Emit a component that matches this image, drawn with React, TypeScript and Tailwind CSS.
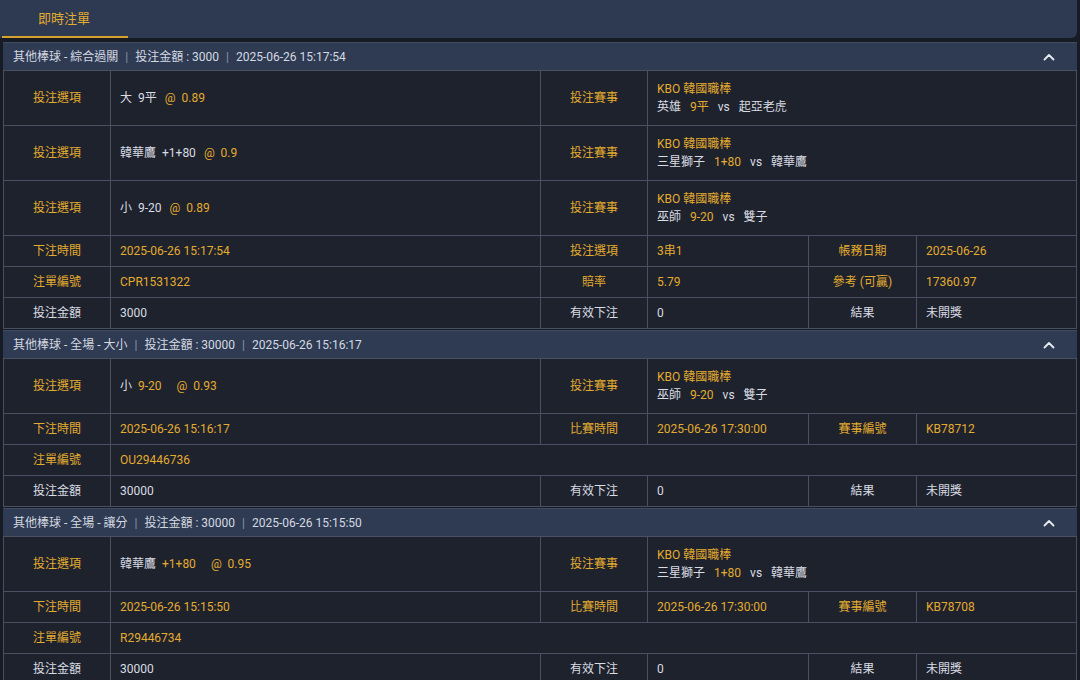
import React from "react";

const gold = "text-[#e3ab30]";
const white = "text-[#d9dce3]";

function Label({ text, g }: { text: string; g?: boolean }) {
    return <td className={`border border-[#4a5061] text-center ${g ? gold : white}`}>{text}</td>;
}

function Value({ children, g, span }: { children: React.ReactNode; g?: boolean; span?: number }) {
    return <td colSpan={span} className={`border border-[#4a5061] pl-[9px] ${g ? gold : white}`}>{children}</td>;
}

function Pick({ a, b, odds, bGold, wide }: { a: string; b: string; odds: string; bGold?: boolean; wide?: boolean }) {
    return <span>
        {a}<span className={`ml-[6px] ${bGold ? gold : ""}`}>{b}</span>
        <span className={`${gold} ${wide ? "ml-[15px]" : "ml-[8px]"}`}>@&nbsp; {odds}</span>
    </span>;
}

function Match({ home, hc, away }: { home: string; hc: string; away: string }) {
    return <div className="leading-[18px]">
        <div className={gold}>KBO 韓國職棒</div>
        <div>{home}<span className={`${gold} ml-[9px]`}>{hc}</span><span className="ml-[9px]">vs</span><span className="ml-[9px]">{away}</span></div>
    </div>;
}

function Header({ text }: { text: React.ReactNode }) {
    return <div className="h-[28px] bg-[#2e3b53] border-t border-[#414c62] flex items-center justify-between pl-[10px] pr-[22px] text-[#d5d9e1]">
        <span>{text}</span>
        <svg width="12" height="8" viewBox="0 0 12 8" fill="none">
            <path d="M1.5 6.5 6 2l4.5 4.5" stroke="#e6e9ef" strokeWidth="1.8" strokeLinecap="round" strokeLinejoin="round" />
        </svg>
    </div>;
}

function Sep() {
    return <span className="mx-[7px] text-[#8b93a4]">|</span>;
}

function Cols() {
    return <colgroup>
        <col className="w-[107px]" />
        <col className="w-[430px]" />
        <col className="w-[107px]" />
        <col className="w-[161px]" />
        <col className="w-[108px]" />
        <col />
    </colgroup>;
}

function Footer({ amount }: { amount: string }) {
    return <tr className="h-[31px]">
        <Label text="投注金額" />
        <Value>{amount}</Value>
        <Label text="有效下注" />
        <Value>0</Value>
        <Label text="結果" />
        <Value>未開獎</Value>
    </tr>;
}

export default function App() {
    return <div className="w-[1080px] h-[680px] overflow-hidden bg-[#171b24] text-[12px]" style={{fontFamily: "Roboto, 'Noto Sans CJK TC', sans-serif"}}>
        <div className="h-[38px] bg-[#2d3a51] rounded-br-[6px] mr-[3px] flex items-end pl-[2px]">
            <div className="w-[126px] h-full flex items-center justify-center border-b-2 border-[#d7a22c] text-[13px] text-[#e3ab30] pt-[1px] pr-[2px]">即時注單</div>
        </div>
        <div className="px-[3px] pt-[4px] flex flex-col gap-[1px]">
            <div>
                <Header text={<>其他棒球 - 綜合過關<Sep />投注金額 : 3000<Sep />2025-06-26 15:17:54</>} />
                <table className="w-full table-fixed border-collapse bg-[#1e222c]">
                    <Cols />
                    <tbody>
                        <tr className="h-[55px]">
                            <Label text="投注選項" g />
                            <Value><Pick a="大" b="9平" odds="0.89" /></Value>
                            <Label text="投注賽事" g />
                            <Value span={3}><Match home="英雄" hc="9平" away="起亞老虎" /></Value>
                        </tr>
                        <tr className="h-[55px]">
                            <Label text="投注選項" g />
                            <Value><Pick a="韓華鷹" b="+1+80" odds="0.9" /></Value>
                            <Label text="投注賽事" g />
                            <Value span={3}><Match home="三星獅子" hc="1+80" away="韓華鷹" /></Value>
                        </tr>
                        <tr className="h-[55px]">
                            <Label text="投注選項" g />
                            <Value><Pick a="小" b="9-20" odds="0.89" /></Value>
                            <Label text="投注賽事" g />
                            <Value span={3}><Match home="巫師" hc="9-20" away="雙子" /></Value>
                        </tr>
                        <tr className="h-[31px]">
                            <Label text="下注時間" g />
                            <Value g>2025-06-26 15:17:54</Value>
                            <Label text="投注選項" g />
                            <Value g>3串1</Value>
                            <Label text="帳務日期" g />
                            <Value g>2025-06-26</Value>
                        </tr>
                        <tr className="h-[31px]">
                            <Label text="注單編號" g />
                            <Value g>CPR1531322</Value>
                            <Label text="賠率" g />
                            <Value g>5.79</Value>
                            <Label text="參考 (可贏)" g />
                            <Value g>17360.97</Value>
                        </tr>
                        <Footer amount="3000" />
                    </tbody>
                </table>
            </div>
            <div>
                <Header text={<>其他棒球 - 全場 - 大小<Sep />投注金額 : 30000<Sep />2025-06-26 15:16:17</>} />
                <table className="w-full table-fixed border-collapse bg-[#1e222c]">
                    <Cols />
                    <tbody>
                        <tr className="h-[55px]">
                            <Label text="投注選項" g />
                            <Value><Pick a="小" b="9-20" odds="0.93" bGold wide /></Value>
                            <Label text="投注賽事" g />
                            <Value span={3}><Match home="巫師" hc="9-20" away="雙子" /></Value>
                        </tr>
                        <tr className="h-[31px]">
                            <Label text="下注時間" g />
                            <Value g>2025-06-26 15:16:17</Value>
                            <Label text="比賽時間" g />
                            <Value g>2025-06-26 17:30:00</Value>
                            <Label text="賽事編號" g />
                            <Value g>KB78712</Value>
                        </tr>
                        <tr className="h-[31px]">
                            <Label text="注單編號" g />
                            <Value g span={5}>OU29446736</Value>
                        </tr>
                        <Footer amount="30000" />
                    </tbody>
                </table>
            </div>
            <div>
                <Header text={<>其他棒球 - 全場 - 讓分<Sep />投注金額 : 30000<Sep />2025-06-26 15:15:50</>} />
                <table className="w-full table-fixed border-collapse bg-[#1e222c]">
                    <Cols />
                    <tbody>
                        <tr className="h-[55px]">
                            <Label text="投注選項" g />
                            <Value><Pick a="韓華鷹" b="+1+80" odds="0.95" bGold wide /></Value>
                            <Label text="投注賽事" g />
                            <Value span={3}><Match home="三星獅子" hc="1+80" away="韓華鷹" /></Value>
                        </tr>
                        <tr className="h-[31px]">
                            <Label text="下注時間" g />
                            <Value g>2025-06-26 15:15:50</Value>
                            <Label text="比賽時間" g />
                            <Value g>2025-06-26 17:30:00</Value>
                            <Label text="賽事編號" g />
                            <Value g>KB78708</Value>
                        </tr>
                        <tr className="h-[31px]">
                            <Label text="注單編號" g />
                            <Value g span={5}>R29446734</Value>
                        </tr>
                        <Footer amount="30000" />
                    </tbody>
                </table>
            </div>
        </div>
    </div>;
}
